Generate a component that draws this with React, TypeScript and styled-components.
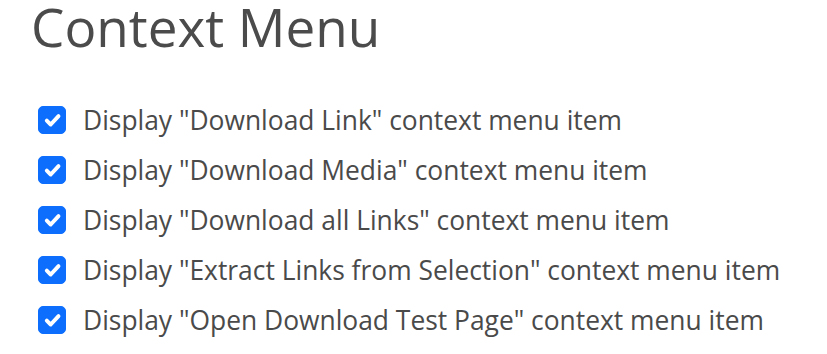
import React, { useState } from 'react';
import styled, { createGlobalStyle } from 'styled-components';

const GlobalStyle = createGlobalStyle`
  html, body {
    margin: 0;
    padding: 0;
    background: #fff;
  }
  body {
    font-family: 'Open Sans', 'Noto Sans', sans-serif;
    color: #4a4a4a;
  }
`;

const Page = styled.div`
  padding: 0 0 0 31px;
`;

const Title = styled.h2`
  margin: 0;
  font-size: 53px;
  font-weight: 400;
  line-height: 54px;
  color: #4b4b4b;
`;

const List = styled.div`
  display: flex;
  flex-direction: column;
  margin-top: 41px;
  padding-left: 7px;
`;

const Row = styled.label`
  display: flex;
  align-items: center;
  gap: 17px;
  height: 50px;
  font-size: 26.4px;
  cursor: pointer;
`;

const Box = styled.span<{ $checked: boolean }>`
  flex: none;
  width: 28px;
  height: 28px;
  border-radius: 5px;
  box-sizing: border-box;
  display: flex;
  background: ${(p) => (p.$checked ? '#0d6efd' : '#fff')};
  border: 1px solid ${(p) => (p.$checked ? '#0d6efd' : '#c4c8cc')};
  svg {
    width: 100%;
    height: 100%;
  }
`;

const Label = styled.span`
  white-space: nowrap;
  margin-top: -1px;
`;

const items = [
  'Display "Download Link" context menu item',
  'Display "Download Media" context menu item',
  'Display "Download all Links" context menu item',
  'Display "Extract Links from Selection" context menu item',
  'Display "Open Download Test Page" context menu item',
];

const App: React.FC = () => {
  const [checked, setChecked] = useState(items.map(() => true));
  const toggle = (i: number) =>
    setChecked((c) => c.map((v, j) => (j === i ? !v : v)));
  return (
    <Page>
      <GlobalStyle />
      <Title>Context Menu</Title>
      <List>
        {items.map((text, i) => (
          <Row key={text} onClick={() => toggle(i)}>
            <Box $checked={checked[i]}>
              {checked[i] && (
                <svg viewBox="0 0 20 20">
                  <path
                    d="M6 10.5l3 3 6-6.5"
                    fill="none"
                    stroke="#fff"
                    strokeWidth="3"
                    strokeLinecap="round"
                    strokeLinejoin="round"
                  />
                </svg>
              )}
            </Box>
            <Label>{text}</Label>
          </Row>
        ))}
      </List>
    </Page>
  );
};

export default App;
